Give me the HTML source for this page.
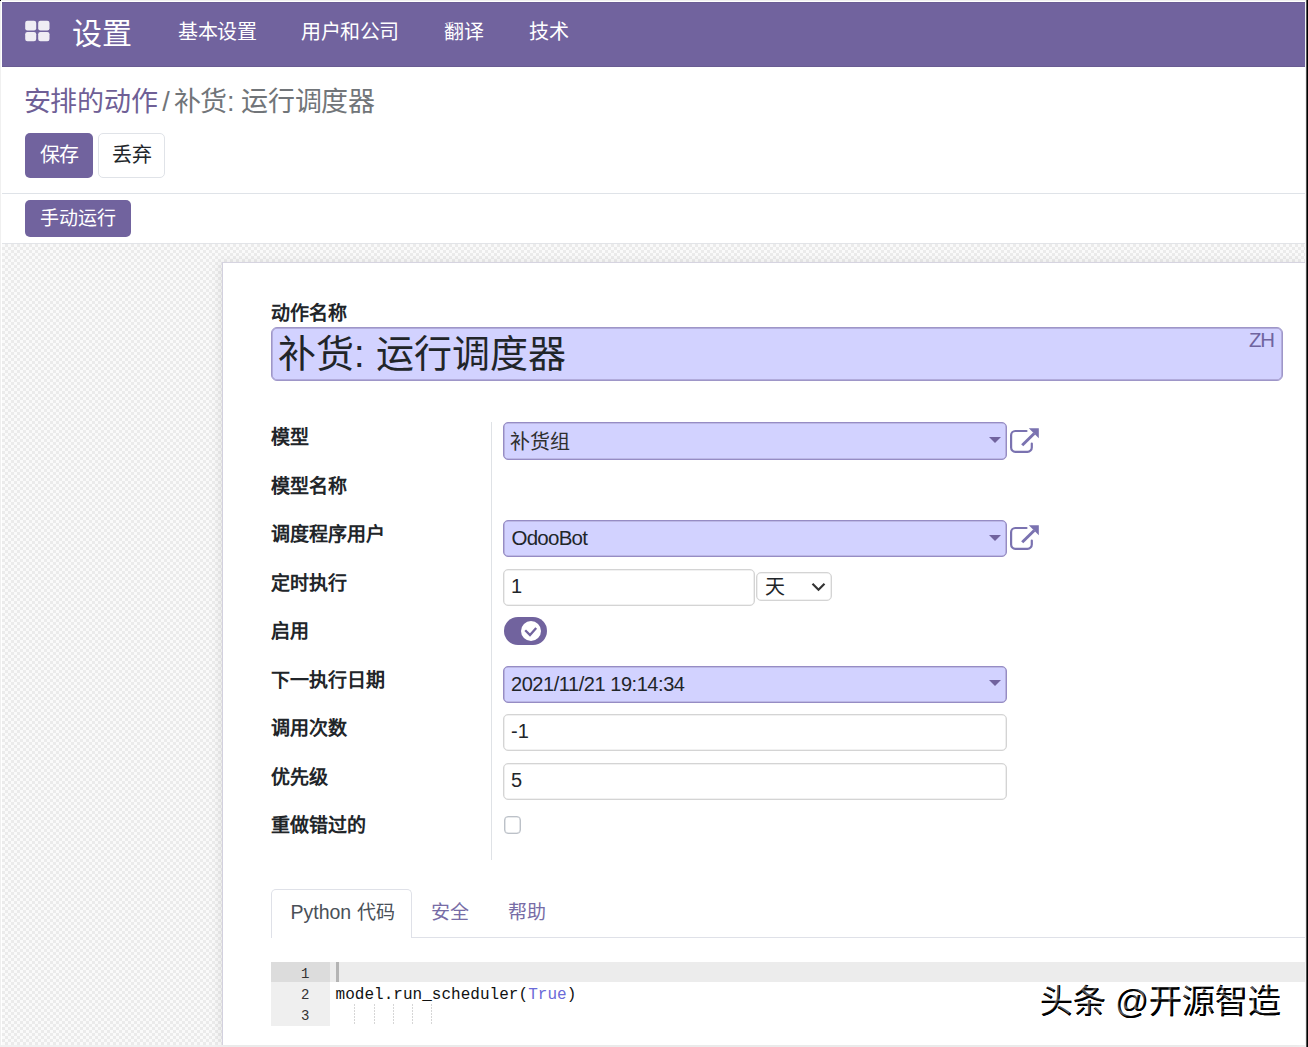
<!DOCTYPE html>
<html lang="zh-CN">
<head>
<meta charset="utf-8">
<style>
*{box-sizing:border-box;margin:0;padding:0}
html,body{width:1308px;height:1047px;overflow:hidden;background:#fff;font-family:"Liberation Sans",sans-serif}
.a{position:absolute;white-space:nowrap}
.nv{color:#fff;font-size:20px;letter-spacing:-0.5px;line-height:20px;top:22px}
.btn{border-radius:5px;font-size:19px;text-align:center}
.lbl{font-weight:bold;font-size:19px;line-height:22px;color:#212529;left:271px}
.fld{left:503px;width:504px;height:37px;border:1px solid #968cc4;box-shadow:inset 0 0 0 0.6px #a59dcc;border-radius:5px;background:#d2d2ff;font-size:19px;line-height:35px;padding-left:8px;color:#212529}
.inp{left:503px;width:504px;height:37px;border:1px solid #d4d4d4;box-shadow:inset 0 0 0 0.6px #e4e4e4;border-radius:5px;background:#fff;font-size:20px;line-height:33px;padding-left:7px;color:#212529}
.dd{position:absolute;right:5px;top:14px;width:0;height:0;border-left:6px solid transparent;border-right:6px solid transparent;border-top:6px solid #71639e}
.ext{position:absolute;left:1009px}
.guide{position:absolute;top:1004px;width:1px;height:21px;background:repeating-linear-gradient(to bottom,#d6d6d6 0 1.5px,transparent 1.5px 3px)}
</style>
</head>
<body>
<!-- screen edges -->
<div class="a" style="left:0;top:0;width:1308px;height:1px;background:#f0f0f0"></div>
<div class="a" style="left:0;top:0;width:1px;height:1047px;background:#f0f0f0"></div>
<div class="a" style="left:0;top:0;width:1px;height:1px;background:#000"></div>
<div class="a" style="left:0;top:1045px;width:1308px;height:2px;background:#f0f0f0"></div>
<div class="a" style="left:1305px;top:0;width:1px;height:1047px;background:#f2f2f2"></div>
<div class="a" style="left:1306px;top:0;width:1px;height:1047px;background:#555"></div><div class="a" style="left:1307px;top:0;width:1px;height:1047px;background:#000"></div>

<!-- navbar -->
<div class="a" style="left:2px;top:2px;width:1303px;height:64.5px;background:#71639e;box-shadow:inset 0 -1px 0 rgba(0,0,0,0.07),inset 0 1px 0 rgba(0,0,0,0.05)"></div>
<svg class="a" style="left:25px;top:20px" width="26" height="22" viewBox="0 0 26 22">
<rect x="0.2" y="0.7" width="11" height="9.8" rx="2.2" fill="#efedf4"/>
<rect x="13.2" y="0.7" width="11.3" height="9.8" rx="2.2" fill="#efedf4"/>
<rect x="0.2" y="12" width="11" height="9.2" rx="2.2" fill="#efedf4"/>
<rect x="13.2" y="12" width="11.3" height="9.2" rx="2.2" fill="#efedf4"/>
</svg>
<div class="a nv" style="left:71.5px;top:19px;font-size:30px;letter-spacing:0;line-height:30px">设置</div>
<div class="a nv" style="left:178px">基本设置</div>
<div class="a nv" style="left:301px">用户和公司</div>
<div class="a nv" style="left:444px">翻译</div>
<div class="a nv" style="left:529px">技术</div>

<!-- control panel -->
<div class="a" style="left:23.8px;top:87px;font-size:27px;letter-spacing:-0.3px;line-height:30px;color:#717579"><span style="color:#6f5f96">安排的动作</span><span style="margin-left:5px">/</span><span style="margin-left:4px">补货: 运行调度器</span></div>
<div class="a btn" style="left:25px;top:133px;width:68px;height:44.5px;line-height:45px;font-size:20px;letter-spacing:-0.5px;background:#71639e;color:#fff">保存</div>
<div class="a btn" style="left:98px;top:133px;width:67px;height:44.5px;line-height:43px;font-size:20px;letter-spacing:-0.5px;background:#fff;color:#212529;border:1px solid #e0e3e8">丢弃</div>
<div class="a" style="left:2px;top:193px;width:1303px;height:1px;background:#dfe3e8"></div>
<div class="a btn" style="left:25px;top:200px;width:106px;height:37px;line-height:38px;background:#71639e;color:#fff">手动运行</div>
<div class="a" style="left:2px;top:243px;width:1303px;height:1px;background:#e2e4e8"></div>

<!-- background -->
<div class="a" style="left:2px;top:244px;width:1303px;height:801px;background-color:#f3f3f3;background-image:repeating-conic-gradient(#ebebeb 0 25%,#fafafa 0 50%);background-size:6px 6px"></div>
<!-- sheet -->
<div class="a" style="left:222px;top:262px;width:1083px;height:783px;background:#fff;border-left:1.5px solid #d3d1df;border-top:1px solid #d6d4e0;box-shadow:-3px -1px 8px rgba(0,0,0,0.07)"></div>

<div class="a lbl" style="top:303px">动作名称</div>
<div class="a" style="left:271px;top:327px;width:1012px;height:54px;border:1px solid #9e96c8;box-shadow:inset 0 0 0 0.7px #a79fcf;border-radius:6px;background:#d2d2ff"></div>
<div class="a" style="left:277.7px;top:331px;font-size:38px;letter-spacing:0.2px;line-height:46px;color:#212529">补货: 运行调度器</div>
<div class="a" style="left:1249px;top:330px;font-size:20.4px;letter-spacing:-1.3px;line-height:20px;color:#6f64a0">ZH</div>

<div class="a" style="left:491px;top:422px;width:1px;height:438px;background:#dfe2e6"></div>

<div class="a lbl" style="top:427px">模型</div>
<div class="a lbl" style="top:476px">模型名称</div>
<div class="a lbl" style="top:524px">调度程序用户</div>
<div class="a lbl" style="top:573px">定时执行</div>
<div class="a lbl" style="top:621px">启用</div>
<div class="a lbl" style="top:670px">下一执行日期</div>
<div class="a lbl" style="top:718px">调用次数</div>
<div class="a lbl" style="top:767px">优先级</div>
<div class="a lbl" style="top:815px">重做错过的</div>

<div class="a fld" style="top:422px;height:37.5px;padding-left:6px;font-size:20px;line-height:38.5px;color:#2e2e2e">补货组<span class="dd"></span></div>
<svg class="a ext" style="top:427px" width="31" height="27" viewBox="0 0 31 27"><path d="M17.5 4H6.3A4.3 4.3 0 0 0 2.1 8.3V20.5A4.3 4.3 0 0 0 6.3 24.8H18.5A4.3 4.3 0 0 0 22.8 20.5V16.5" fill="none" stroke="#7a72b0" stroke-width="2.2" stroke-linecap="round"/><path d="M13.2 18.2L25.2 6.5" stroke="#7a72b0" stroke-width="3"/><path d="M19.8 1.2H29.8V11.2Z" fill="#7a72b0"/></svg>

<div class="a fld" style="top:520px;padding-left:7.5px;font-size:20.5px;letter-spacing:-0.75px;line-height:33px">OdooBot<span class="dd"></span></div>
<svg class="a ext" style="top:524px" width="31" height="27" viewBox="0 0 31 27"><path d="M17.5 4H6.3A4.3 4.3 0 0 0 2.1 8.3V20.5A4.3 4.3 0 0 0 6.3 24.8H18.5A4.3 4.3 0 0 0 22.8 20.5V16.5" fill="none" stroke="#7a72b0" stroke-width="2.2" stroke-linecap="round"/><path d="M13.2 18.2L25.2 6.5" stroke="#7a72b0" stroke-width="3"/><path d="M19.8 1.2H29.8V11.2Z" fill="#7a72b0"/></svg>

<div class="a inp" style="top:568.5px;width:252px">1</div>
<div class="a inp" style="top:571.5px;left:756px;width:76px;height:29.5px;line-height:28px;padding-left:8px;font-size:20px">天
<svg style="position:absolute;left:54px;top:9px" width="15" height="10" viewBox="0 0 15 10"><path d="M1.5 1.8L7.5 7.8L13.5 1.8" fill="none" stroke="#333" stroke-width="2.2"/></svg></div>

<div class="a" style="left:503.5px;top:616.5px;width:43.5px;height:28.5px;border-radius:14.5px;background:#71639e"></div>
<div class="a" style="left:520.8px;top:620.6px;width:20.4px;height:20.4px;border-radius:50%;background:#fff"></div>
<svg class="a" style="left:520px;top:620px" width="22" height="22" viewBox="0 0 22 22"><path d="M5.2 10.2L10 15L16.2 8" fill="none" stroke="#71639e" stroke-width="2.3"/></svg>

<div class="a fld" style="top:666px;font-size:20px;letter-spacing:-0.45px;padding-left:7px;line-height:34px">2021/11/21 19:14:34<span class="dd" style="top:13px"></span></div>
<div class="a inp" style="top:714px">-1</div>
<div class="a inp" style="top:763px">5</div>
<div class="a" style="left:503.5px;top:816.3px;width:17.5px;height:17.5px;border:1px solid #bcc1c8;box-shadow:inset 0 0 0 0.6px #cfd3d8;border-radius:4px;background:#fff"></div>

<!-- notebook -->
<div class="a" style="left:271px;top:937px;width:1034px;height:1px;background:#dfe1e8"></div>
<div class="a" style="left:271px;top:889px;width:141px;height:49px;border:1px solid #dfe1e8;border-bottom:none;border-radius:5px 5px 0 0;background:#fff;font-size:19.5px;line-height:45px;padding-left:18.5px;color:#4a5058">Python <span style="font-size:19px">代码</span></div>
<div class="a" style="left:431px;top:901px;font-size:19px;line-height:24px;color:#776ca6">安全</div>
<div class="a" style="left:508px;top:901px;font-size:19px;line-height:24px;color:#776ca6">帮助</div>

<!-- code editor -->
<div class="a" style="left:271px;top:961.5px;width:59px;height:64px;background:#efefef"></div>
<div class="a" style="left:271px;top:961.5px;width:59px;height:20.5px;background:#dcdcdc"></div>
<div class="a" style="left:330px;top:961.5px;width:975px;height:20.5px;background:#ececec"></div>
<div class="a" style="left:336px;top:961.5px;width:2.5px;height:20.5px;background:#b4b4b4"></div>
<div class="a" style="left:271px;top:963.5px;width:38.5px;text-align:right;font-family:'Liberation Mono',monospace;font-size:14px;line-height:21.2px;color:#333;white-space:pre">1
2
3</div>
<div class="a" style="left:335.5px;top:984.5px;font-family:'Liberation Mono',monospace;font-size:16px;letter-spacing:0.03px;line-height:21.2px;color:#111">model.run_scheduler(<span style="color:#6a6ad8">True</span>)</div>
<div class="guide" style="left:354px"></div>
<div class="guide" style="left:373.5px"></div>
<div class="guide" style="left:393px"></div>
<div class="guide" style="left:412px"></div>
<div class="guide" style="left:431px"></div>

<!-- watermark -->
<div class="a" style="left:1040px;top:981.5px;font-size:33px;line-height:40px;color:#000;text-shadow:0.4px 0.4px 0 #000">头条 @开源智造</div><div class="a" style="left:1038.5px;top:980px;font-size:33px;line-height:40px;color:rgba(255,255,255,0.35)">头条 @开源智造</div>

</body>
</html>
